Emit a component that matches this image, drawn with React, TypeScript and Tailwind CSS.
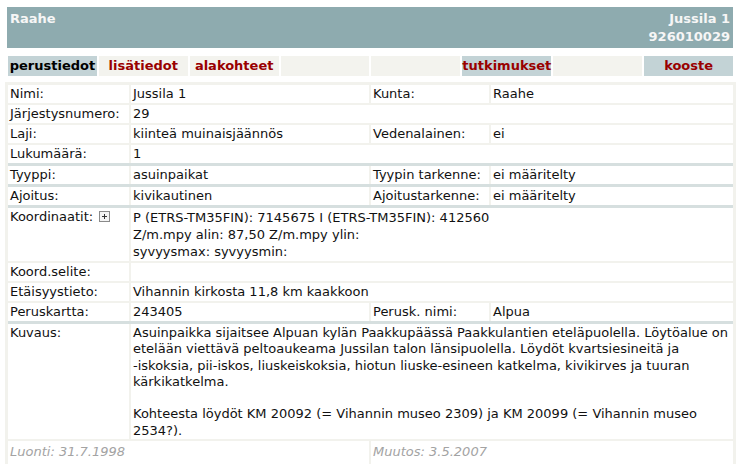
import React from "react"

type Cell = { label: string; value: React.ReactNode }

function Row({ a, b }: { a: Cell; b?: Cell }) {
  return (
    <div className="flex gap-[2px]">
      <div className="w-[121px] shrink-0 bg-white px-[2px] py-[1px]">{a.label}</div>
      {b ? (
        <>
          <div className="w-[238px] shrink-0 bg-white px-[2px] py-[1px]">{a.value}</div>
          <div className="w-[118px] shrink-0 bg-white px-[2px] py-[1px]">{b.label}</div>
          <div className="flex-1 bg-white px-[2px] py-[1px]">{b.value}</div>
        </>
      ) : (
        <div className="flex-1 bg-white px-[2px] py-[1px]">{a.value}</div>
      )}
    </div>
  )
}

function Sep() {
  return <div className="-my-[2px] h-[3px] bg-[#d6dfdf]" />
}

function PlusBox() {
  return (
    <svg width="11" height="11" viewBox="0 0 11 11" className="ml-[6px] inline-block align-[-1px]">
      <rect x="0.5" y="0.5" width="10" height="10" fill="#f4f4f4" stroke="#8a8a8a" />
      <path d="M3 5.5h5M5.5 3v5" stroke="#333" strokeWidth="1" />
    </svg>
  )
}

const tabs = [
  { t: "perustiedot", active: true, dark: true },
  { t: "lisätiedot" },
  { t: "alakohteet" },
  { t: "" },
  { t: "" },
  { t: "tutkimukset", active: true },
  { t: "" },
  { t: "kooste", active: true },
]

export default function App() {
  return (
    <div className="min-h-[464px] bg-white pl-[5px] pt-[7px] font-['DejaVu_Sans','Verdana',sans-serif] text-[13px] leading-[16px] text-[#111]">
      {/* otsikko */}
      <div className="ml-[2px] flex w-[726px] justify-between bg-[#8eabaf] px-[3px] pb-[2px] pt-[3px] text-[13px] font-bold leading-[18px] text-[#f6f6f6]">
        <div>Raahe</div>
        <div className="text-right">
          <div>Jussila 1</div>
          <div>926010029</div>
        </div>
      </div>

      {/* välilehdet */}
      <div className="ml-[3px] mt-[8px] flex w-[725px] gap-[2px]">
        {tabs.map((tab, i) => (
          <div
            key={i}
            className={
              "flex h-[20px] flex-1 items-center justify-center whitespace-nowrap font-bold leading-[20px] " +
              (tab.active ? "bg-[#c3d3d6] " : "bg-[#f3f3ee] ") +
              (tab.dark ? "text-[#000]" : "text-[#990000]")
            }
          >
            {tab.t}
          </div>
        ))}
      </div>

      {/* tiedot */}
      <div className="mt-[6px] flex w-[731px] flex-col gap-[2px] bg-[#f2f2ed] p-[3px] pb-0">
        <Row a={{ label: "Nimi:", value: "Jussila 1" }} b={{ label: "Kunta:", value: "Raahe" }} />
        <Row a={{ label: "Järjestysnumero:", value: "29" }} />
        <Row a={{ label: "Laji:", value: "kiinteä muinaisjäännös" }} b={{ label: "Vedenalainen:", value: "ei" }} />
        <Row a={{ label: "Lukumäärä:", value: "1" }} />
        <Sep />
        <Row a={{ label: "Tyyppi:", value: "asuinpaikat" }} b={{ label: "Tyypin tarkenne:", value: "ei määritelty" }} />
        <Sep />
        <Row a={{ label: "Ajoitus:", value: "kivikautinen" }} b={{ label: "Ajoitustarkenne:", value: "ei määritelty" }} />
        <Sep />
        <div className="flex gap-[2px]">
          <div className="w-[121px] shrink-0 bg-white px-[2px] pb-[1px] pt-[1px]">
            Koordinaatit:
            <PlusBox />
          </div>
          <div className="flex-1 bg-white px-[2px] pb-[1px] pt-[1px] leading-[17px]">
            P (ETRS-TM35FIN): 7145675 I (ETRS-TM35FIN): 412560
            <br />
            Z/m.mpy alin: 87,50 Z/m.mpy ylin:
            <br />
            syvyysmax: syvyysmin:
          </div>
        </div>
        <Row a={{ label: "Koord.selite:", value: "" }} />
        <Row a={{ label: "Etäisyystieto:", value: "Vihannin kirkosta 11,8 km kaakkoon" }} />
        <Row a={{ label: "Peruskartta:", value: "243405" }} b={{ label: "Perusk. nimi:", value: "Alpua" }} />
        <Sep />
        <div className="flex gap-[2px]">
          <div className="w-[121px] shrink-0 bg-white px-[2px] py-[1px]">Kuvaus:</div>
          <div className="flex-1 whitespace-nowrap bg-white px-[2px] pb-0 pt-[1px] leading-[16.3px]">
            Asuinpaikka sijaitsee Alpuan kylän Paakkupäässä Paakkulantien eteläpuolella. Löytöalue on
            <br />
            etelään viettävä peltoaukeama Jussilan talon länsipuolella. Löydöt kvartsiesineitä ja
            <br />
            -iskoksia, pii-iskos, liuskeiskoksia, hiotun liuske-esineen katkelma, kivikirves ja tuuran
            <br />
            kärkikatkelma.
            <br />
            <br />
            Kohteesta löydöt KM 20092 (= Vihannin museo 2309) ja KM 20099 (= Vihannin museo
            <br />
            2534?).
          </div>
        </div>
        <div className="flex gap-[2px]">
          <div className="w-[361px] shrink-0 bg-white px-[2px] pb-[8px] pt-[3px] italic text-[#a3a3a3]">Luonti: 31.7.1998</div>
          <div className="flex-1 bg-white px-[2px] pb-[8px] pt-[3px] italic text-[#a3a3a3]">Muutos: 3.5.2007</div>
        </div>
      </div>
    </div>
  )
}
